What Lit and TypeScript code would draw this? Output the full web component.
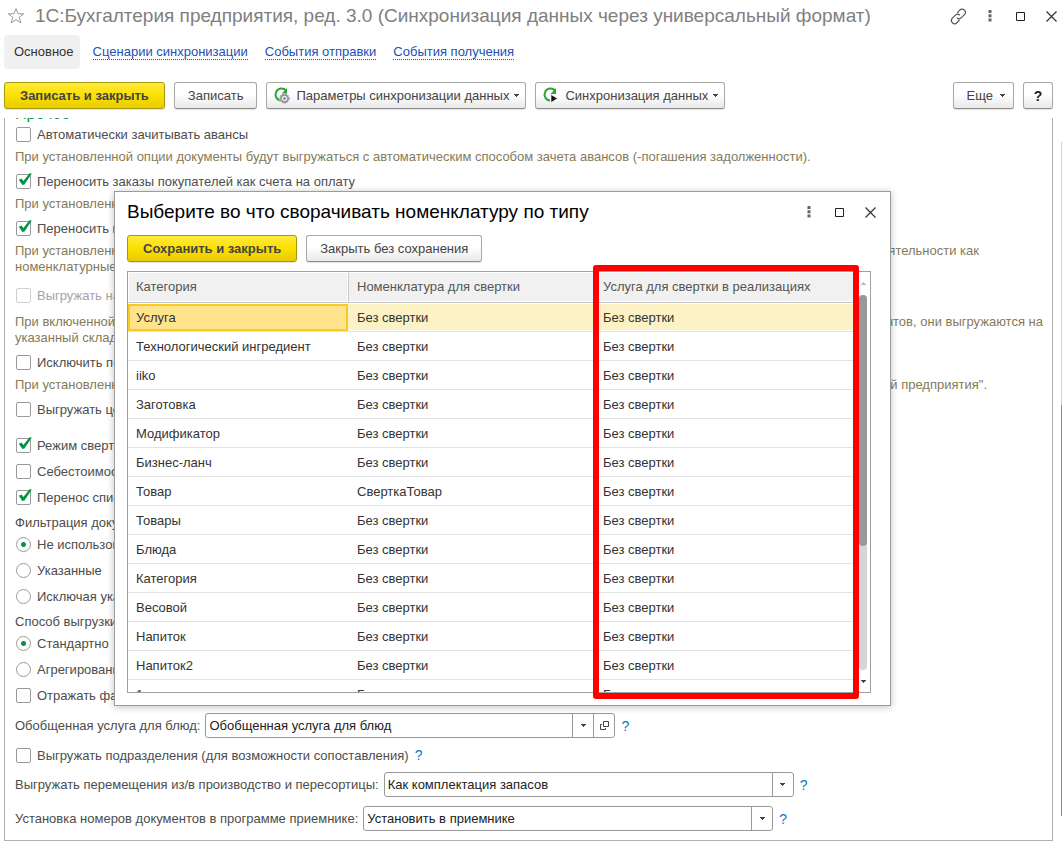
import { LitElement, html, svg, css, nothing } from "lit";
import { customElement, property, state } from "lit/decorators.js";
import { classMap } from "lit/directives/class-map.js";

const arrow = html`<svg class="arrow" width="7" height="5" viewBox="0 0 7 5" aria-hidden="true"><path d="M1 1h5v1h-1v1h-1v1h-1v-1h-1v-1h-1z" fill="currentColor"></path></svg>`;

const refreshArc = svg`<path d="M13 3.5A6 6 0 1 0 8 13.5" fill="none" stroke="#2fa336" stroke-width="2"></path><path d="M14 1v6H8.500z" fill="#2fa336"></path>`;

const controls = css`
  *,
  *::before,
  *::after {
    box-sizing: border-box;
  }
  button,
  input,
  select {
    font: inherit;
    color: inherit;
    margin: 0;
  }
  svg {
    display: block;
    flex: none;
  }
  .btn {
    display: inline-flex;
    align-items: center;
    justify-content: center;
    height: 27px;
    padding: 0 13px;
    border: 1px solid #a9a9a9;
    border-bottom-color: #8e8e8e;
    border-radius: 3px;
    background: linear-gradient(#fff 45%, #e9e9e9);
    box-shadow: 0 1px 1px #0000001f;
    color: #444;
    white-space: nowrap;
  }
  .btn.primary {
    padding: 0 15px;
    border-color: #a8980f;
    background: linear-gradient(#ffea3c, #fbe000 50%, #e8cc00);
    font-weight: bold;
  }
  .icons {
    display: flex;
    align-items: center;
    color: #333;
  }
  .icon {
    display: flex;
    align-items: center;
    justify-content: center;
    width: 31px;
    height: 24px;
    padding: 0;
    border: 0;
    background: none;
  }
`;

const dots = html`<svg width="4" height="12" viewBox="0 0 4 12"><path d="M.5 0h3v3h-3zM.5 4.200h3v3h-3zM.5 8.400h3v3h-3z" fill="#666"></path></svg>`;
const square = html`<svg width="9" height="9" viewBox="0 0 9 9"><path d="M.5.5h8v8h-8z" fill="none" stroke="#222"></path></svg>`;
const cross = html`<svg width="11" height="11" viewBox="0 0 11 11"><path d="M.5.5l10 10M10.500.5l-10 10" stroke="#333" stroke-width="1.200"></path></svg>`;

@customElement("option-row")
class OptionRow extends LitElement {
  @property() label = "";
  @property() kind = "checkbox";
  @property({ type: Boolean }) checked = false;
  @property({ type: Boolean }) disabled = false;

  static styles = css`
    :host {
      display: block;
    }
    .row {
      display: flex;
      align-items: center;
      gap: 6px;
      height: 16px;
      white-space: nowrap;
    }
    .row.off {
      color: #a5a5a5;
    }
    .text {
      padding-top: 2px;
    }
    .box {
      position: relative;
      flex: none;
      width: 15px;
      height: 15px;
      margin-left: 1px;
    }
    input {
      appearance: none;
      display: block;
      box-sizing: border-box;
      width: 15px;
      height: 15px;
      margin: 0;
      border: 1px solid #9a9a9a;
      border-radius: 2px;
      background: #fff;
    }
    .off input {
      border-color: #cfcfcf;
    }
    .radio input {
      border-radius: 50%;
    }
    .radio input:checked {
      background: radial-gradient(circle, #009646 2px, #fff 3px);
    }
    .tick {
      position: absolute;
      left: 2px;
      top: -1px;
      pointer-events: none;
    }
  `;

  render() {
    const radio = this.kind === "radio";
    return html`<label class=${classMap({ row: true, radio, off: this.disabled })}>
      <span class="box">
        <input type=${this.kind} .checked=${this.checked} ?disabled=${this.disabled} />
        ${this.checked && !radio
          ? html`<svg class="tick" width="14" height="13" viewBox="0 0 14 13"><path d="M.8 6.800l2.800-1.200 1.800 2.400L11.500.3l2.300.3L6.500 11.400 4.300 12z" fill="#009646"></path></svg>`
          : nothing}
      </span>
      <span class="text">${this.label}</span>
    </label>`;
  }
}

interface Item {
  category: string;
  fold: string;
}

@customElement("fold-dialog")
class FoldDialog extends LitElement {
  @state() selected = 0;

  items: Item[] = [
    "Услуга",
    "Технологический ингредиент",
    "iiko",
    "Заготовка",
    "Модификатор",
    "Бизнес-ланч",
    "Товар",
    "Товары",
    "Блюда",
    "Категория",
    "Весовой",
    "Напиток",
    "Напиток2",
    "1",
  ].map((category) => ({ category, fold: category === "Товар" ? "СверткаТовар" : "Без свертки" }));

  static styles = [
    controls,
    css`
      :host {
        display: block;
        box-sizing: border-box;
        padding: 8px 19px 12px 12px;
        border: 1px solid #9c9c9c;
        background: #fff;
        box-shadow: 0 1px 7px #00000040;
      }
      .head {
        display: flex;
        align-items: center;
        justify-content: space-between;
        height: 24px;
      }
      h2 {
        margin: 0;
        font-size: 19px;
        font-weight: normal;
        color: #000;
        white-space: nowrap;
      }
      .icons {
        margin-right: -15px;
      }
      .actions {
        display: flex;
        gap: 9px;
        margin: 11px 0 9px;
      }
      .grid {
        position: relative;
        display: flex;
        height: 422px;
        border: 1px solid #a0a0a0;
      }
      .view {
        flex: 1;
        overflow: hidden;
      }
      table {
        width: 100%;
        border-collapse: separate;
        border-spacing: 0;
        table-layout: fixed;
        color: #333;
      }
      .c1 {
        width: 220px;
      }
      .c2 {
        width: 246px;
      }
      th {
        height: 31px;
        padding: 0 8px 2px;
        border: 1px solid #fff;
        border-bottom: 1px solid #c4c4c4;
        background: #f1f1f1;
        color: #555;
        font-weight: normal;
        text-align: left;
        box-shadow: inset 0 -1px #fff;
      }
      th:first-child {
        padding-left: 7px;
      }
      th:nth-child(2) {
        border-left-color: #c8c8c8;
      }
      td {
        height: 29px;
        padding: 2px 8px 0;
        border-bottom: 1px solid #e2e2e2;
        white-space: nowrap;
      }
      td + td {
        padding-left: 9px;
      }
      .selected td {
        padding-top: 1px;
        border-top: 1px solid #fff;
        background: #fdf2c6;
        box-shadow: inset 0 -1px #fff;
      }
      .selected td:first-child {
        background: #ffe48c;
        box-shadow: inset 0 0 0 2px #f8ca22;
      }
      .bar {
        display: flex;
        flex-direction: column;
        align-items: center;
        width: 16px;
        padding: 9px 0 8px 2px;
        color: #444;
      }
      .up {
        transform: rotate(180deg);
        color: #bbb;
      }
      .track {
        width: 8px;
        flex: 1;
        margin: 9px 0;
        border-radius: 4px;
        background: #d6d6d6;
      }
      .thumb {
        height: 67%;
        border-radius: 4px;
        background: #999;
      }
      .mark {
        position: absolute;
        left: 465px;
        right: 11px;
        top: -7px;
        bottom: -7px;
        border: 6px solid #f00;
        border-radius: 3px;
        pointer-events: none;
      }
    `,
  ];

  render() {
    return html`
      <div class="head">
        <h2>Выберите во что сворачивать номенклатуру по типу</h2>
        <div class="icons">
          <button class="icon" aria-label="Меню">${dots}</button>
          <button class="icon" aria-label="Развернуть">${square}</button>
          <button class="icon" aria-label="Закрыть">${cross}</button>
        </div>
      </div>
      <div class="actions">
        <button class="btn primary">Сохранить и закрыть</button>
        <button class="btn">Закрыть без сохранения</button>
      </div>
      <div class="grid">
        <div class="view">
          <table>
            <colgroup><col class="c1" /><col class="c2" /><col /></colgroup>
            <thead>
              <tr><th>Категория</th><th>Номенклатура для свертки</th><th>Услуга для свертки в реализациях</th></tr>
            </thead>
            <tbody>
              ${this.items.map(
                (item, i) => html`<tr class=${classMap({ selected: i === this.selected })} @click=${() => (this.selected = i)}>
                  <td>${item.category}</td><td>${item.fold}</td><td>Без свертки</td>
                </tr>`
              )}
            </tbody>
          </table>
        </div>
        <div class="bar">
          <span class="up">${arrow}</span>
          <div class="track"><div class="thumb"></div></div>
          ${arrow}
        </div>
        <div class="mark"></div>
      </div>
    `;
  }
}

@customElement("app-root")
class AppRoot extends LitElement {
  static styles = [
    controls,
    css`
      :host {
        display: flex;
        flex-direction: column;
        position: relative;
        box-sizing: border-box;
        min-height: 100vh;
        padding: 4px 0 5px;
        background: #fff;
        font: 13px/16px "Liberation Sans", Arial, sans-serif;
        color: #4d4d4d;
        overflow: hidden;
      }
      .title {
        display: flex;
        align-items: center;
        height: 24px;
        padding-left: 7px;
      }
      h1 {
        flex: 1;
        margin: 0 0 0 10px;
        font-size: 19px;
        font-weight: normal;
        color: #808080;
        white-space: nowrap;
      }
      .title .icons {
        margin-right: -5px;
      }
      nav {
        display: flex;
        align-items: center;
        gap: 17px;
        margin: 7px 4px 13px;
      }
      .tab {
        margin-right: -4px;
        padding: 9px 6px 9px 10px;
        border-radius: 4px;
        background: #f0f0f0;
        color: #333;
      }
      nav a {
        border-bottom: 1px dotted #1c4fb5;
        line-height: 14px;
        color: #1c4fb5;
        text-decoration: none;
      }
      .tools {
        display: flex;
        gap: 9px;
        margin: 0 9px 9px 4px;
      }
      .tools .btn {
        gap: 6px;
      }
      .tools .icon-btn {
        padding: 0 5px 0 6px;
      }
      .icon-btn .arrow {
        margin-left: -2px;
      }
      .tools .more {
        margin-left: auto;
        padding-right: 7px;
      }
      .tools .help {
        width: 30px;
        padding: 0;
        font-size: 14px;
        font-weight: bold;
        color: #222;
      }
      .body {
        display: flex;
        flex: 1;
        justify-content: space-between;
      }
      .panel {
        flex: 1;
        display: flex;
        flex-direction: column;
        margin: 0 8px 0 4px;
        padding: 0 9px 9px 10px;
        border: 1px solid #b0b0b0;
        border-top: 0;
        overflow: hidden;
      }
      .scroll {
        width: 1px;
        margin: 24px 0 25px;
        background: linear-gradient(#d0d0d0 39%, #8f8f8f 39%);
      }
      h3 {
        margin: -12px 0 4px;
        font-size: 16px;
        font-weight: normal;
        color: #009646;
        line-height: 16px;
      }
      .group {
        display: flex;
        flex-direction: column;
        gap: 7px;
        margin-bottom: 8px;
      }
      .group.wide {
        gap: 10px;
        margin-bottom: 10px;
      }
      .group.loose {
        gap: 11px;
      }
      .group.apart {
        margin-bottom: 12px;
      }
      .group.far {
        margin-bottom: 20px;
      }
      .group.tight {
        gap: 5px;
        margin-bottom: 10px;
      }
      .hint {
        margin: 0;
        color: #857a5a;
        white-space: nowrap;
      }
      .line {
        display: flex;
        justify-content: space-between;
      }
      .to-a {
        padding-right: 64px;
      }
      .to-b {
        padding-right: 56px;
      }
      .field {
        display: flex;
        align-items: center;
        gap: 5px;
        margin-bottom: 9px;
      }
      .field:last-child {
        margin-bottom: 0;
      }
      .field label {
        white-space: nowrap;
      }
      .combo {
        display: flex;
        position: relative;
        flex: 0 1 410px;
        height: 25px;
        border: 1px solid #9a9a9a;
        border-radius: 3px;
        background: #fff;
        color: #222;
      }
      .combo input,
      .combo select {
        appearance: none;
        flex: 1;
        min-width: 0;
        padding: 0 3px;
        border: 0;
        outline: 0;
        background: none;
      }
      .side {
        display: flex;
        align-items: center;
        justify-content: center;
        width: 21px;
        padding: 0;
        border: 0;
        border-left: 1px solid #9a9a9a;
        background: none;
        color: #444;
        pointer-events: none;
      }
      button.side {
        pointer-events: auto;
      }
      .q {
        margin-left: 1px;
        padding: 0;
        border: 0;
        background: none;
        color: #0b78c4;
        font-size: 14px;
      }
      .window {
        position: absolute;
        left: 114px;
        right: 171px;
        top: 191px;
      }
    `,
  ];

  private choice(id: string, label: string, value: string) {
    return html`<div class="field">
      <label for=${id}>${label}</label>
      <div class="combo">
        <select id=${id}><option>${value}</option></select>
        <span class="side">${arrow}</span>
      </div>
      <button class="q" aria-label="Справка">?</button>
    </div>`;
  }

  render() {
    return html`
      <header class="title">
        <svg width="18" height="18" viewBox="0 0 18 18"><path d="M9 1.500l2 5.300h5.800l-4.600 3.500 1.700 5.700L9 12.600 4.100 16l1.700-5.700L1.200 6.800H7z" fill="none" stroke="#999"></path></svg>
        <h1>1С:Бухгалтерия предприятия, ред. 3.0 (Синхронизация данных через универсальный формат)</h1>
        <div class="icons">
          <button class="icon" aria-label="Получить ссылку">
            <svg width="17" height="17" viewBox="0 0 17 17" fill="none" stroke="#555" stroke-width="1.200"><path d="M7.200 4.800l2.600-2.600a3.200 3.200 0 0 1 4.600 0 3.200 3.200 0 0 1 0 4.500l-3 3a3.200 3.200 0 0 1-4.500 0M9.500 12l-2.600 2.700a3.200 3.200 0 0 1-4.500 0 3.200 3.200 0 0 1 0-4.500l3-3a3.200 3.200 0 0 1 4.500 0"></path></svg>
          </button>
          <button class="icon" aria-label="Меню">${dots}</button>
          <button class="icon" aria-label="Развернуть">${square}</button>
          <button class="icon" aria-label="Закрыть">${cross}</button>
        </div>
      </header>
      <nav>
        <span class="tab">Основное</span>
        <a href="#scenarios">Сценарии синхронизации</a>
        <a href="#sent">События отправки</a>
        <a href="#received">События получения</a>
      </nav>
      <div class="tools">
        <button class="btn primary">Записать и закрыть</button>
        <button class="btn">Записать</button>
        <button class="btn icon-btn">
          <svg width="17" height="17" viewBox="0 0 17 17">${refreshArc}<circle cx="11.500" cy="11.500" r="4.800" fill="#8a9199" stroke="#fff"></circle><circle cx="11.500" cy="11.500" r="4.600" fill="none" stroke="#737b83" stroke-dasharray="1.500 1.200"></circle><circle cx="11.500" cy="11.500" r="2.800" fill="#e6e9ec"></circle><circle cx="11.500" cy="11.500" r="1.200" fill="#737b83"></circle></svg>
          Параметры синхронизации данных ${arrow}
        </button>
        <button class="btn icon-btn">
          <svg width="17" height="17" viewBox="0 0 17 17">${refreshArc}<path d="M9 7.500v8l6.500-4z" fill="#111" stroke="#fff" stroke-width=".6"></path></svg>
          Синхронизация данных ${arrow}
        </button>
        <button class="btn more">Еще ${arrow}</button>
        <button class="btn help">?</button>
      </div>
      <div class="body">
        <main class="panel">
          <h3>Прочее</h3>
          <div class="group">
            <option-row label="Автоматически зачитывать авансы"></option-row>
            <p class="hint">При установленной опции документы будут выгружаться с автоматическим способом зачета авансов (-погашения задолженности).</p>
          </div>
          <div class="group">
            <option-row checked label="Переносить заказы покупателей как счета на оплату"></option-row>
            <p class="hint">При установленной опции заказы покупателей выгружаются как счета.</p>
          </div>
          <div class="group apart">
            <option-row checked label="Переносить номенклатурные группы"></option-row>
            <p class="hint">
              <span class="line to-a"><span>При установленной опции группы выгружаются</span><span>виды деятельности как</span></span>
              <span class="line">номенклатурные группы.</span>
            </p>
          </div>
          <div class="group loose">
            <option-row disabled label="Выгружать на указанный склад"></option-row>
            <p class="hint">
              <span class="line"><span>При включенной опции склады не выгружаются</span><span>из документов, они выгружаются на</span></span>
              <span class="line">указанный склад.</span>
            </p>
          </div>
          <div class="group">
            <option-row label="Исключить перемещения"></option-row>
            <p class="hint line to-b"><span>При установленной опции не выгружаются</span><span>в Бухгалтерией предприятия".</span></p>
          </div>
          <div class="group far"><option-row label="Выгружать цены"></option-row></div>
          <div class="group wide">
            <option-row checked label="Режим свертки номенклатуры"></option-row>
            <option-row label="Себестоимость"></option-row>
            <option-row checked label="Перенос списаний"></option-row>
          </div>
          <div class="group tight">
            <span>Фильтрация документов:</span>
            <option-row kind="radio" checked label="Не использовать"></option-row>
          </div>
          <div class="group wide">
            <option-row kind="radio" label="Указанные"></option-row>
            <option-row kind="radio" label="Исключая указанные"></option-row>
          </div>
          <div class="group tight">
            <span>Способ выгрузки:</span>
            <option-row kind="radio" checked label="Стандартно"></option-row>
          </div>
          <div class="group wide">
            <option-row kind="radio" label="Агрегированно"></option-row>
            <option-row label="Отражать факт"></option-row>
          </div>
          <div class="field">
            <label for="service">Обобщенная услуга для блюд:</label>
            <div class="combo">
              <input id="service" type="text" value="Обобщенная услуга для блюд" />
              <button class="side" aria-label="Выбрать">${arrow}</button>
              <button class="side" aria-label="Открыть">
                <svg width="9" height="9" viewBox="0 0 9 9" fill="none" stroke="#444"><path d="M3.500.5h5v5h-5zM2 3.500H.5v5h5V7"></path></svg>
              </button>
            </div>
            <button class="q" aria-label="Справка">?</button>
          </div>
          <div class="field">
            <option-row label="Выгружать подразделения (для возможности сопоставления)"></option-row>
            <button class="q" aria-label="Справка">?</button>
          </div>
          ${this.choice("moves", "Выгружать перемещения из/в производство и пересортицы:", "Как комплектация запасов")}
          ${this.choice("numbers", "Установка номеров документов в программе приемнике:", "Установить в приемнике")}
        </main>
        <div class="scroll"></div>
      </div>
      <fold-dialog class="window" role="dialog" aria-label="Свертка номенклатуры"></fold-dialog>
    `;
  }
}
